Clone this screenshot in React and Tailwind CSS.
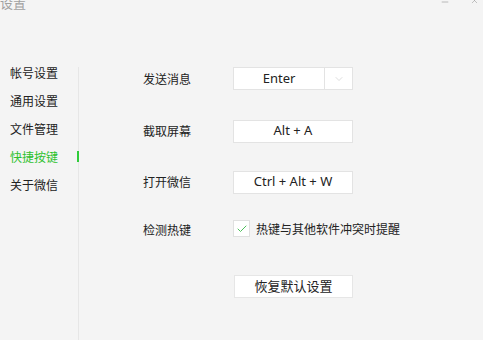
import { Minus, X, ChevronDown, Check } from 'lucide-react';

const menu = ['帐号设置', '通用设置', '文件管理', '快捷按键', '关于微信'];
const active = '快捷按键';

const KeyBox = ({ children, dropdown }) => (
  <div className="flex h-[23px] w-[120px] items-stretch border border-[#e3e3e3] bg-white text-[13px] text-[#222]">
    <div className="flex flex-1 items-center justify-center">{children}</div>
    {dropdown && (
      <div className="flex w-[28px] items-center justify-center border-l border-[#e3e3e3]">
        <ChevronDown size={12} strokeWidth={1} className="text-[#bbb]" />
      </div>
    )}
  </div>
);

export default function App() {
  return (
    <div
      className="relative h-[340px] w-[483px] overflow-hidden bg-[#f4f4f4] text-[#333]"
      style={{ fontFamily: '"Noto Sans", "Noto Sans CJK SC", sans-serif' }}
    >
      {/* title bar */}
      <div className="flex h-[12px] items-start justify-between">
        <span className="-mt-[6px] text-[13px] leading-[18px] text-[#a0a0a0]">设置</span>
        <div className="flex items-start gap-[20px] pr-[4px]">
          <Minus size={10} strokeWidth={1.5} className="-mt-[3px] text-[#999]" />
          <X size={9} strokeWidth={1.5} className="-mt-[4px] text-[#999]" />
        </div>
      </div>

      <div className="flex items-start">
        {/* sidebar */}
        <div className="mt-[48px] w-[78px]">
          {menu.map((m) => (
            <div
              key={m}
              className={`relative flex h-[28px] items-center pl-[10px] text-[12px] ${
                m === active ? 'text-[#2ec12e]' : 'text-[#222]'
              }`}
            >
              {m}
              {m === active && <div className="absolute right-[-1px] top-[7px] h-[11px] w-[2px] bg-[#2fcc3a]" />}
            </div>
          ))}
        </div>

        {/* content */}
        <div className="mt-[55px] h-[280px] flex-1 border-l border-[#e6e6e6] pl-[64px] text-[12px] text-[#222]">
          <div className="flex h-[23px] items-center">
            <span className="mt-[3px] w-[90px]">发送消息</span>
            <KeyBox dropdown>Enter</KeyBox>
          </div>
          <div className="mt-[30px] flex h-[22px] items-center">
            <span className="mt-[2px] w-[90px]">截取屏幕</span>
            <KeyBox>Alt + A</KeyBox>
          </div>
          <div className="mt-[29px] flex h-[22px] items-center">
            <span className="mt-[1px] w-[90px]">打开微信</span>
            <KeyBox>Ctrl + Alt + W</KeyBox>
          </div>
          <div className="mt-[27px] flex h-[17px] items-center">
            <span className="mt-[4px] w-[90px]">检测热键</span>
            <div className="flex h-[17px] w-[17px] items-center justify-center border border-[#e0e0e0] bg-white">
              <Check size={12} strokeWidth={2} className="text-[#4cbf5a]" />
            </div>
            <span className="ml-[6px] mt-[3px]">热键与其他软件冲突时提醒</span>
          </div>
          <div className="ml-[91px] mt-[38px] flex h-[23px] w-[119px] items-center justify-center border border-[#e6e6e6] bg-white text-[13px] text-[#222]">
            恢复默认设置
          </div>
        </div>
      </div>
    </div>
  );
}
